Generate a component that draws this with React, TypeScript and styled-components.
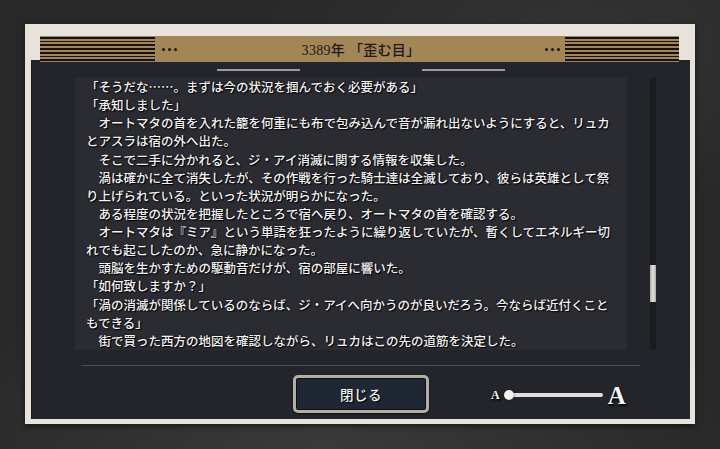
import styled, { createGlobalStyle } from "styled-components";

const GlobalStyle = createGlobalStyle`
  html, body {
    margin: 0;
    padding: 0;
    background: #2a2a2a;
  }
  body {
    font-family: "Liberation Serif", "Noto Sans CJK JP", serif;
  }
`;

const Page = styled.div`
  width: 720px;
  height: 449px;
  box-sizing: border-box;
  padding: 24px 0 0 25px;
  background:
    radial-gradient(ellipse 60% 40% at 45% 100%, #3a3a3a 0%, rgba(58, 58, 58, 0) 100%),
    radial-gradient(ellipse 50% 40% at 80% 10%, #333 0%, rgba(51, 51, 51, 0) 100%),
    #282828;
  overflow: hidden;
`;

const Frame = styled.div`
  width: 670px;
  height: 400px;
  box-sizing: border-box;
  padding: 0 5px 5px 6px;
  background: #e7e3db;
  display: flex;
  flex-direction: column;
  box-shadow: 0 2px 6px rgba(0, 0, 0, 0.5);
`;

const HeaderZone = styled.div`
  padding: 12px 11px 0 9px;
`;

const HeaderBar = styled.div`
  position: relative;
  z-index: 1;
  height: 26px;
  margin-bottom: -2px;
  background: #a38656;
  display: grid;
  grid-template-columns: 115px 22px 1fr 22px 114px;
  align-items: center;
`;

const Stripes = styled.div`
  height: 26px;
  background: repeating-linear-gradient(
    to bottom,
    #a38656 0px,
    #a38656 1px,
    #15120e 1px,
    #15120e 2.7px,
    #a38656 2.7px,
    #a38656 3.7px
  );
`;

const Dots = styled.div<{ $side: "left" | "right" }>`
  display: flex;
  gap: 3px;
  justify-content: ${(p) => (p.$side === "left" ? "flex-start" : "flex-end")};
  padding: ${(p) => (p.$side === "left" ? "0 0 0 7px" : "0 5px 0 0")};
  span {
    width: 3px;
    height: 3px;
    border-radius: 50%;
    background: #1c1710;
  }
`;

const Title = styled.div`
  text-align: center;
  font-size: 14px;
  font-weight: 500;
  color: #1d1812;
  letter-spacing: 0.3px;
  padding-left: 2px;
`;

const Body = styled.div`
  flex: 1;
  background: #24252a;
  display: flex;
  flex-direction: column;
  border-left: 1px solid #1a1a1d;
`;

const TabLines = styled.div`
  margin-top: 9px;
  display: flex;
  justify-content: center;
  gap: 122px;
  span {
    width: 83px;
    height: 2px;
    background: #9c9ca0;
  }
`;

const ContentRow = styled.div`
  margin-top: 7px;
  padding-left: 43px;
  display: flex;
  gap: 23px;
`;

const TextBox = styled.div`
  width: 552px;
  height: 272px;
  box-sizing: border-box;
  padding: 0 0 0 11px;
  background: #2b2c32;
  overflow: hidden;
`;

const Line = styled.div`
  height: 18.13px;
  line-height: 18.13px;
  font-family: "Noto Sans CJK JP", sans-serif;
  font-size: 12.5px;
  font-weight: 500;
  white-space: nowrap;
  color: #f3f3f3;
  text-shadow: 1px 1px 1px #000, 0 0 2px rgba(0, 0, 0, 0.8);
`;

const ScrollTrack = styled.div`
  width: 6px;
  height: 272px;
  background: #1b1c20;
  display: flex;
  flex-direction: column;
`;

const ScrollThumb = styled.div`
  margin-top: 187px;
  height: 37px;
  background: linear-gradient(to right, #a9a9ab, #e2e2e2 50%, #a9a9ab);
`;

const Divider = styled.div`
  margin: 15px 0 0 49px;
  width: 559px;
  height: 1px;
  background: #4d4e55;
`;

const BottomRow = styled.div`
  margin-top: 8px;
  padding-left: 261px;
  display: flex;
  align-items: center;
  gap: 62px;
`;

const CloseButton = styled.button`
  width: 136px;
  height: 38px;
  box-sizing: border-box;
  border: 3px solid #b4afa3;
  border-radius: 5px;
  background: #1f2634;
  box-shadow: inset 0 0 0 1px #0c0f15, 0 1px 2px rgba(0, 0, 0, 0.6);
  color: #f2f2f2;
  font-family: "Noto Sans CJK JP", sans-serif;
  font-size: 13.5px;
  font-weight: 500;
  letter-spacing: 0.5px;
  text-shadow: 1px 1px 1px #000;
  padding: 0;
`;

const SizeSlider = styled.div`
  display: flex;
  align-items: center;
  height: 38px;
  padding-top: 2px;
`;

const GlyphA = styled.span<{ $size: number }>`
  font-family: "Liberation Serif", serif;
  font-weight: bold;
  font-size: ${(p) => p.$size}px;
  line-height: 1;
  color: #f4f4f4;
  text-shadow: 1px 1px 1px #000, 1px 2px 2px rgba(0, 0, 0, 0.7);
`;

const Track = styled.div`
  position: relative;
  width: 98px;
  height: 4px;
  margin: 0 5px 0 5px;
  border-radius: 2px;
  background: #dedede;
`;

const Knob = styled.div`
  position: absolute;
  left: -1px;
  top: -3px;
  width: 10px;
  height: 10px;
  border-radius: 50%;
  background: #f2f2f2;
  box-shadow: 0 0 2px rgba(0, 0, 0, 0.6);
`;

const lines = [
  "「そうだな……。まずは今の状況を掴んでおく必要がある」",
  "「承知しました」",
  "　オートマタの首を入れた籠を何重にも布で包み込んで音が漏れ出ないようにすると、リュカ",
  "とアスラは宿の外へ出た。",
  "　そこで二手に分かれると、ジ・アイ消滅に関する情報を収集した。",
  "　渦は確かに全て消失したが、その作戦を行った騎士達は全滅しており、彼らは英雄として祭",
  "り上げられている。といった状況が明らかになった。",
  "　ある程度の状況を把握したところで宿へ戻り、オートマタの首を確認する。",
  "　オートマタは『ミア』という単語を狂ったように繰り返していたが、暫くしてエネルギー切",
  "れでも起こしたのか、急に静かになった。",
  "　頭脳を生かすための駆動音だけが、宿の部屋に響いた。",
  "「如何致しますか？」",
  "「渦の消滅が関係しているのならば、ジ・アイへ向かうのが良いだろう。今ならば近付くこと",
  "もできる」",
  "　街で買った西方の地図を確認しながら、リュカはこの先の道筋を決定した。",
];

function App() {
  return (
    <Page>
      <GlobalStyle />
      <Frame>
        <HeaderZone>
          <HeaderBar>
            <Stripes />
            <Dots $side="left">
              <span />
              <span />
              <span />
            </Dots>
            <Title>3389年 「歪む目」</Title>
            <Dots $side="right">
              <span />
              <span />
              <span />
            </Dots>
            <Stripes />
          </HeaderBar>
        </HeaderZone>
        <Body>
          <TabLines>
            <span />
            <span />
          </TabLines>
          <ContentRow>
            <TextBox>
              {lines.map((l, i) => (
                <Line key={i}>{l}</Line>
              ))}
            </TextBox>
            <ScrollTrack>
              <ScrollThumb />
            </ScrollTrack>
          </ContentRow>
          <Divider />
          <BottomRow>
            <CloseButton>閉じる</CloseButton>
            <SizeSlider>
              <GlyphA $size={12}>A</GlyphA>
              <Track>
                <Knob />
              </Track>
              <GlyphA $size={25}>A</GlyphA>
            </SizeSlider>
          </BottomRow>
        </Body>
      </Frame>
    </Page>
  );
}

export default App;
